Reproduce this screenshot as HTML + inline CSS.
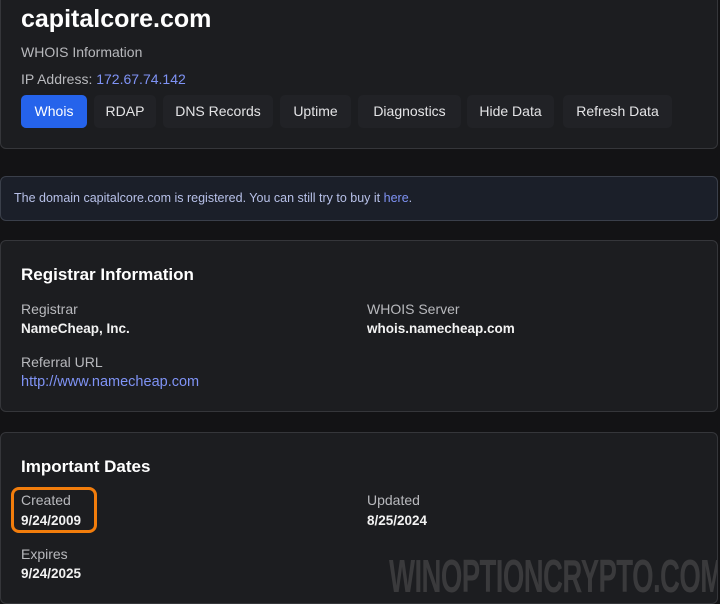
<!DOCTYPE html><html><head><style>
body{margin:0;width:720px;height:604px;background:#131315;font-family:"Liberation Sans",sans-serif;color:#fff;position:relative;overflow:hidden}
.card{position:absolute;left:0;width:718px;background:#1c1d20;border:1px solid #35363a;border-radius:6px;box-sizing:border-box;overflow:hidden}
.btn{position:absolute;top:95px;height:33px;line-height:33px;font-size:14px;text-align:center;background:#212226;border-radius:5px;color:#e4e4e6}
.lbl{position:absolute;font-size:14px;color:#b8b9bd}
.val{position:absolute;font-size:13.5px;font-weight:bold;color:#f2f2f2}
a{color:#7f93f5;text-decoration:none}
</style></head><body>
<div class="card" style="top:-6px;height:155px">
<div style="position:absolute;left:20px;top:10px;font-size:25px;font-weight:bold">capitalcore.com</div>
<div class="lbl" style="left:20px;top:49px">WHOIS Information</div>
<div class="lbl" style="left:20px;top:76px">IP Address: <a>172.67.74.142</a></div>
</div>
<div class="btn" style="left:21px;width:66px;background:#2563eb;color:#fff">Whois</div>
<div class="btn" style="left:94px;width:62px">RDAP</div>
<div class="btn" style="left:163px;width:110px">DNS Records</div>
<div class="btn" style="left:280px;width:71px">Uptime</div>
<div class="btn" style="left:358px;width:103px">Diagnostics</div>
<div class="btn" style="left:467px;width:87px">Hide Data</div>
<div class="btn" style="left:563px;width:109px">Refresh Data</div>
<div class="card" style="top:176px;height:45px;background:#1b1f29;border-color:#3a3f4a">
<div style="position:absolute;left:13px;top:14px;font-size:12.5px;color:#b7c0e8">The domain capitalcore.com is registered. You can still try to buy it <a>here</a>.</div></div>
<div class="card" style="top:240px;height:172px">
<div style="position:absolute;left:20px;top:24px;font-size:17px;font-weight:bold">Registrar Information</div>
<div class="lbl" style="left:20px;top:60px">Registrar</div>
<div class="val" style="left:20px;top:80px">NameCheap, Inc.</div>
<div class="lbl" style="left:366px;top:60px">WHOIS Server</div>
<div class="val" style="left:366px;top:80px">whois.namecheap.com</div>
<div class="lbl" style="left:20px;top:113px">Referral URL</div>
<div style="position:absolute;left:20px;top:133px;font-size:14.5px"><a>http://www.namecheap.com</a></div>
</div>
<div class="card" style="top:432px;height:172px">
<div style="position:absolute;left:20px;top:24px;font-size:17px;font-weight:bold">Important Dates</div>
<div style="position:absolute;left:10px;top:54px;width:86px;height:46px;border:3px solid #f27d0c;border-radius:8px;box-sizing:border-box"></div>
<div class="lbl" style="left:20px;top:59px">Created</div>
<div class="val" style="left:20px;top:80px">9/24/2009</div>
<div class="lbl" style="left:366px;top:59px">Updated</div>
<div class="val" style="left:366px;top:80px">8/25/2024</div>
<div class="lbl" style="left:20px;top:113px">Expires</div>
<div class="val" style="left:20px;top:133px">9/24/2025</div>
<div style="position:absolute;left:388px;top:116px;font-size:46px;font-weight:bold;color:#3a3a3c;letter-spacing:-1px;transform:scaleX(0.6);transform-origin:left;white-space:nowrap">WINOPTIONCRYPTO.COM</div>
</div>
</body></html>
